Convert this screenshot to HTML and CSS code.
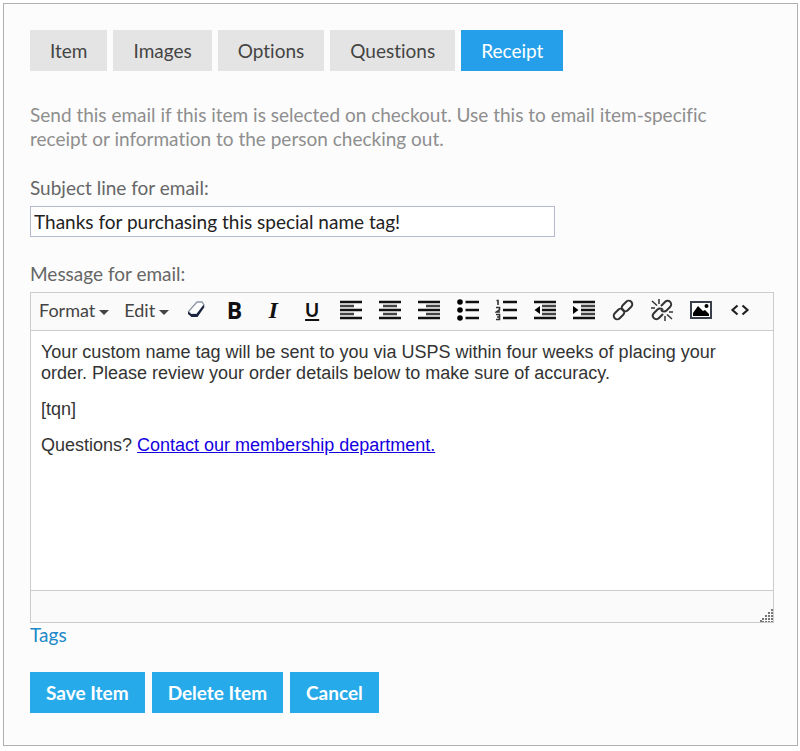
FILE: index.html
```
<!DOCTYPE html>
<html lang="en">
<head>
    <meta charset="UTF-8">
    <meta name="viewport" content="width=device-width, initial-scale=1.0">
    <title>Item Receipt</title>
    <link rel="stylesheet" href="styles.css">
</head>
<body>
    <form class="panel">
        <nav class="tabs">
            <button type="button" class="tab">Item</button>
            <button type="button" class="tab">Images</button>
            <button type="button" class="tab">Options</button>
            <button type="button" class="tab">Questions</button>
            <button type="button" class="tab active">Receipt</button>
        </nav>

        <p class="help">Send this email if this item is selected on checkout. Use this to email item-specific receipt or information to the person checking out.</p>

        <label class="field-label" for="subject">Subject line for email:</label>
        <input type="text" id="subject" class="subject" value="Thanks for purchasing this special name tag!">

        <label class="field-label" id="message-label">Message for email:</label>
        <div class="editor">
            <div class="toolbar">
                <button type="button" class="menu">Format<span class="caret"></span></button>
                <button type="button" class="menu">Edit<span class="caret"></span></button>
                <div class="tools">
                    <button type="button" class="tool" aria-label="Clear formatting">
                        <svg viewBox="0 0 22 22"><path d="M12 3h5l2 3-7 9.500H6L3.500 12.500z" fill="#fff" stroke="#8d95a6" stroke-width="1.300"/><path d="M3 12.500L6 15h5.500L18.500 6l1 2-7 10H6.500L3 15z" fill="#1d2440"/></svg>
                    </button>
                    <button type="button" class="tool bold" aria-label="Bold">B</button>
                    <button type="button" class="tool italic" aria-label="Italic">I</button>
                    <button type="button" class="tool underline" aria-label="Underline">U</button>
                    <button type="button" class="tool" aria-label="Align left">
                        <svg viewBox="0 0 22 22"><path d="M0 3h22M0 11h22M0 19h22" stroke="#111" stroke-width="2.600"/><path d="M0 7h14M0 15h14" stroke="#444" stroke-width="2.600"/></svg>
                    </button>
                    <button type="button" class="tool" aria-label="Align center">
                        <svg viewBox="0 0 22 22"><path d="M0 3h22M0 11h22M0 19h22" stroke="#111" stroke-width="2.600"/><path d="M4 7h14M4 15h14" stroke="#444" stroke-width="2.600"/></svg>
                    </button>
                    <button type="button" class="tool" aria-label="Align right">
                        <svg viewBox="0 0 22 22"><path d="M0 3h22M0 11h22M0 19h22" stroke="#111" stroke-width="2.600"/><path d="M8 7h14M8 15h14" stroke="#444" stroke-width="2.600"/></svg>
                    </button>
                    <button type="button" class="tool" aria-label="Bulleted list">
                        <svg viewBox="0 0 22 22"><path d="M8.500 3H22M8.500 11H22M8.500 19H22" stroke="#111" stroke-width="2.700"/><circle cx="3" cy="3" r="2.800"/><circle cx="3" cy="11" r="2.800"/><circle cx="3" cy="19" r="2.800"/></svg>
                    </button>
                    <button type="button" class="tool" aria-label="Numbered list">
                        <svg viewBox="0 0 22 22"><path d="M8 3h14M8 11h14M8 19h14" stroke="#111" stroke-width="2.700"/><path d="M1.500 1.500H3V6M1 8.500h3.500v2.300L1.500 13h3.500M1 15.500h3.500v5H1M2 18h2.500" fill="none" stroke="#333" stroke-width="1.600"/></svg>
                    </button>
                    <button type="button" class="tool" aria-label="Outdent">
                        <svg viewBox="0 0 22 22"><path d="M0 3h22M8 11h14M0 19h22" stroke="#111" stroke-width="2.600"/><path d="M8 7h14M8 15h14" stroke="#444" stroke-width="2.600"/><path d="M6 7v8l-5.500-4z"/></svg>
                    </button>
                    <button type="button" class="tool" aria-label="Indent">
                        <svg viewBox="0 0 22 22"><path d="M0 3h22M8 11h14M0 19h22" stroke="#111" stroke-width="2.600"/><path d="M8 7h14M8 15h14" stroke="#444" stroke-width="2.600"/><path d="M0 7v8l5.500-4z"/></svg>
                    </button>
                    <button type="button" class="tool" aria-label="Insert link">
                        <svg viewBox="0 0 22 22"><g fill="none" stroke="#333" stroke-width="2"><rect x="-6" y="-3.500" width="12" height="7" rx="3.500" transform="translate(15 7) rotate(-45)"/><rect x="-6" y="-3.500" width="12" height="7" rx="3.500" transform="translate(7 15) rotate(-45)"/></g></svg>
                    </button>
                    <button type="button" class="tool" aria-label="Remove link">
                        <svg viewBox="0 0 22 22"><g fill="none" stroke="#333" stroke-width="2"><path d="M10 7l4-4c3.500-3.500 8.500 1.500 5 5l-3.500 3.500c-1.500 1.500-4 1.500-5.500-.5"/><path d="M12 15l-4 4c-3.500 3.500-8.500-1.500-5-5l3.500-3.500c1.500-1.500 4-1.500 5.500.5"/><path d="M8 0v5M1 2l5 4.500M0 9h4M14 17v5M16 15.500l5 4.500M18 13h4" stroke-width="1.500"/></g></svg>
                    </button>
                    <button type="button" class="tool" aria-label="Insert image">
                        <svg viewBox="0 0 22 22"><rect x="1" y="3" width="20" height="16" fill="#fff" stroke="#3a3f4c" stroke-width="2"/><path d="M3 17v-3l5-7 5 5 2-1 4 4v2z"/><circle cx="16.500" cy="7" r="2"/></svg>
                    </button>
                    <button type="button" class="tool" aria-label="Edit source">
                        <svg viewBox="0 0 22 22"><path d="M8.500 6.500l-5 4.500 5 4.500M13.500 6.500l5 4.500-5 4.500" fill="none" stroke="#222" stroke-width="2.200"/></svg>
                    </button>
                </div>
            </div>
            <div class="message" contenteditable="true" role="textbox" aria-multiline="true" aria-labelledby="message-label" spellcheck="false">
                <p>Your custom name tag will be sent to you via USPS within four weeks of placing your order. Please review your order details below to make sure of accuracy.</p>
                <p>[tqn]</p>
                <p>Questions? <a href="#">Contact our membership department.</a></p>
            </div>
            <div class="statusbar">
                <svg class="grip" viewBox="0 0 13 13"><path d="M12 0v13M9 3v10M6 6v7M3 9v4M1 11v2" stroke="#777" stroke-width="2" stroke-dasharray="2 1"/></svg>
            </div>
        </div>
        <a class="tags" href="#">Tags</a>

        <div class="actions">
            <button type="submit">Save Item</button>
            <button type="button">Delete Item</button>
            <button type="button">Cancel</button>
        </div>
    </form>
</body>
</html>
```
FILE: styles.css
```
* {
    box-sizing: border-box;
}
body {
    margin: 3px 2px 4px 3px;
    background-color: #fff;
    color: #444;
    font-family: Lato, "Open Sans", sans-serif;
    font-size: 19px;
    font-variant-ligatures: none;
    line-height: 24px;
}
button, input {
    font-family: inherit;
    font-size: inherit;
    font-variant-ligatures: inherit;
    line-height: inherit;
}
button {
    padding: 0;
    border: none;
    background: none;
    color: inherit;
    cursor: pointer;
}
.panel {
    padding: 26px 23px 32px 26px;
    border: 1px solid #b0b0b0;
    background-color: #fcfcfc;
}

/* Tabs */
.tabs {
    display: flex;
    gap: 6px;
}
.tab {
    height: 41px;
    padding: 0 20px;
    background-color: #e4e4e4;
}
.tab.active {
    background-color: #259fea;
    color: #fff;
}

.help {
    max-width: 720px;
    margin: 32px 0 25px;
    color: #8e8e8e;
}
.field-label {
    display: block;
    color: #666;
}
.subject {
    display: block;
    width: 525px;
    max-width: 100%;
    height: 31px;
    margin: 6px 0 25px;
    padding: 0 3px 1px;
    border: 1px solid #b4b9cf;
    background-color: #fff;
    color: #222;
}

/* Editor */
.editor {
    margin-top: 6px;
    border: 1px solid #ccc;
    background-color: #fff;
}
.toolbar {
    display: flex;
    align-items: center;
    gap: 15px;
    height: 38px;
    padding: 0 14px 3px 8px;
    border-bottom: 1px solid #ccc;
    background-color: #fafafa;
}
.menu {
    display: flex;
    align-items: center;
    gap: 4px;
    font-size: 18px;
}
.caret {
    margin-top: 4px;
    border: 5px solid transparent;
    border-top-color: #444;
    border-bottom: none;
}
.tools {
    display: flex;
    flex: 1;
    margin-left: -8px;
}
.tool {
    display: flex;
    flex: 1 0 0;
    justify-content: center;
    align-items: center;
    height: 34px;
    color: #111;
}
.tool svg {
    width: 22px;
    height: 22px;
}
.bold {
    font-family: "Open Sans", sans-serif;
    font-size: 23px;
    font-weight: bold;
}
.italic {
    font-family: "Liberation Serif", serif;
    font-size: 24px;
    font-style: italic;
    font-weight: bold;
}
.underline {
    font-size: 19px;
    font-weight: bold;
    text-decoration: underline;
    text-decoration-thickness: 2px;
    text-underline-offset: 2px;
}
.message {
    min-height: 259px;
    padding: 11px 10px;
    color: #333;
    font-family: "Liberation Sans", Arial, sans-serif;
    font-size: 18px;
    line-height: 21px;
}
.message p {
    margin: 0 0 15px;
}
.message a {
    color: #1400e0;
}
.statusbar {
    display: flex;
    justify-content: flex-end;
    align-items: flex-end;
    height: 32px;
    border-top: 1px solid #ccc;
    background-color: #fafafa;
}
.grip {
    width: 13px;
    height: 13px;
}

.tags {
    display: inline-block;
    color: #2088c8;
    text-decoration: none;
}
.actions {
    display: flex;
    gap: 7px;
    margin-top: 25px;
}
.actions button {
    height: 41px;
    padding: 0 16px;
    background-color: #27aaea;
    color: #fff;
    font-weight: bold;
}
```
